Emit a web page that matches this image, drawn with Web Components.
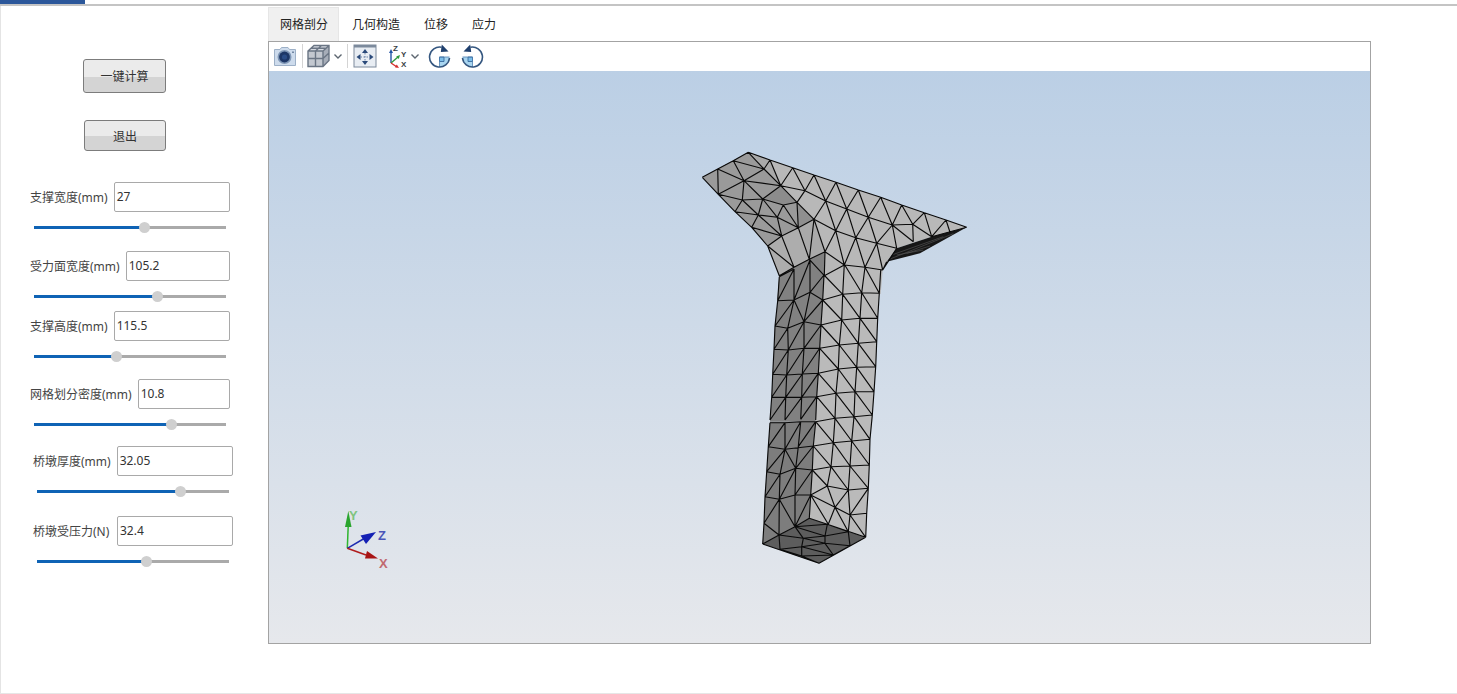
<!DOCTYPE html>
<html lang="zh">
<head>
<meta charset="utf-8">
<title>桥墩网格</title>
<style>
  html, body { margin: 0; height: 100%; background: #fff; overflow: hidden; }
  body { font: 12px "Noto Sans", "Noto Sans CJK SC", sans-serif; color: #333; }
</style>
</head>
<body>
<sim-app>
  <side-panel slot="side">
    <push-btn style="margin: 59px 0 0 83px; width: 83px; height: 34px">一键计算</push-btn>
    <push-btn style="margin: 27px 0 0 84px; width: 82px; height: 31px">退出</push-btn>
    <param-row value="27" pos="57.4" style="margin: 31px 0 0 30px">支撑宽度(mm)</param-row>
    <param-row value="105.2" pos="64.2" style="margin: 18px 0 0 30px">受力面宽度(mm)</param-row>
    <param-row value="115.5" pos="42.8" style="margin: 9px 0 0 30px">支撑高度(mm)</param-row>
    <param-row value="10.8" pos="71.5" style="margin: 17px 0 0 30px">网格划分密度(mm)</param-row>
    <param-row value="32.05" pos="74.6" style="margin: 16px 0 0 33px">桥墩厚度(mm)</param-row>
    <param-row value="32.4" pos="56.9" style="margin: 19px 0 0 33px; --label-w: 78px">桥墩受压力(N)</param-row>
  </side-panel>
  <view-tabs slot="main"></view-tabs>
  <view-frame slot="main">
    <view-toolbar></view-toolbar>
    <mesh-view></mesh-view>
  </view-frame>
</sim-app>

<script>
// ---- app shell: thin ribbon strip on top, side panel + main column below
class SimApp extends HTMLElement {
    constructor() {
        super();
        this.attachShadow({ mode: "open" });
        this.shadowRoot.innerHTML = `
          <style>
            :host { display: flex; flex-direction: column; width: 1457px; height: 694px; box-sizing: border-box;
                    border-bottom: 1px solid #e6e6e6; }
            .strip { height: 4px; flex: none; }
            .strip i { display: block; width: 85px; height: 4px; background: #2b579a; }
            .rule { height: 2px; flex: none; background: #c4c4c4; }
            .body { flex: 1; display: flex; border-left: 1px solid #e4e4e4; min-height: 0; }
            .side { flex: none; width: 267px; display: block; }
            .main { flex: none; width: 1103px; padding-top: 1px; }
          </style>
          <div class="strip"><i></i></div>
          <div class="rule"></div>
          <div class="body">
            <div class="side"><slot name="side"></slot></div>
            <div class="main"><slot name="main"></slot></div>
          </div>`;
    }
}

class SidePanel extends HTMLElement {
    constructor() {
        super();
        this.attachShadow({ mode: "open" });
        this.shadowRoot.innerHTML = `
          <style>
            :host { display: flex; flex-direction: column; align-items: flex-start; margin: -6px 0 0 -1px; }
          </style>
          <slot></slot>`;
    }
}

class PushBtn extends HTMLElement {
    constructor() {
        super();
        this.attachShadow({ mode: "open" });
        this.shadowRoot.innerHTML = `
          <style>
            :host { display: flex; align-items: center; justify-content: center; box-sizing: border-box;
                    border: 1px solid #7c7c7c; border-radius: 3px; color: #333; flex: none;
                    background: linear-gradient(#ebebeb 0 52%, #d4d4d4 52% 100%); }
          </style>
          <slot></slot>`;
    }
}

class ParamRow extends HTMLElement {
    constructor() {
        super();
        this.attachShadow({ mode: "open" });
        this.shadowRoot.innerHTML = `
          <style>
            :host { display: block; width: 200px; flex: none; }
            .top { display: flex; align-items: center; gap: 6px; height: 30px; }
            .label { flex: none; white-space: nowrap; color: #444; min-width: var(--label-w, 0); }
            .value { flex: 1; box-sizing: border-box; height: 30px; line-height: 28px; padding-left: 2px;
                     border: 1px solid #a9a9a9; border-radius: 2px; background: #fff; color: #333; }
            .slider { position: relative; height: 3px; width: 192px; margin: 13.5px 0 4.5px 4px; background: #aaa; }
            .fill { height: 3px; background: #0f63b5; }
            .thumb { position: absolute; top: -4px; width: 11px; height: 11px; margin-left: -5.5px;
                     border-radius: 50%; background: #cfcfcf; }
          </style>
          <div class="top">
            <span class="label"><slot></slot></span>
            <div class="value"></div>
          </div>
          <div class="slider"><div class="fill"></div><div class="thumb"></div></div>`;
    }

    connectedCallback() {
        const pos = this.getAttribute("pos") + "%";
        this.shadowRoot.querySelector(".value").textContent = this.getAttribute("value");
        this.shadowRoot.querySelector(".fill").style.width = pos;
        this.shadowRoot.querySelector(".thumb").style.left = pos;
    }
}

class ViewTabs extends HTMLElement {
    constructor() {
        super();
        this.attachShadow({ mode: "open" });
        this.shadowRoot.innerHTML = `
          <style>
            :host { display: flex; height: 34px; color: #222; }
            span { box-sizing: border-box; padding: 0 12px; line-height: 35px; white-space: nowrap; }
            .on { width: 71px; padding-right: 0; background: #f0f0f0; border: 1px solid #e6e6e6; border-bottom: 0; line-height: 33px; padding-left: 11px; }
            .on + span { padding-left: 13px; }
          </style>
          <span class="on">网格剖分</span><span>几何构造</span><span>位移</span><span>应力</span>`;
    }
}

class ViewFrame extends HTMLElement {
    constructor() {
        super();
        this.attachShadow({ mode: "open" });
        this.shadowRoot.innerHTML = `
          <style>
            :host { display: flex; flex-direction: column; box-sizing: border-box; height: 603px;
                    border: 1px solid #a3a3a3; background: #fff; }
          </style>
          <slot></slot>`;
    }
}

class ViewToolbar extends HTMLElement {
    constructor() {
        super();
        this.attachShadow({ mode: "open" });
        const chevron = (ml) => `<svg style="margin-left:${ml}px" width="10" height="24" viewBox="0 0 10 24"><path d="M1.5 10.5 5 14l3.5-3.5" fill="none" stroke="#5d6670" stroke-width="1.4"/></svg>`;
        const rotate = `
            <path d="M11.5 13H21.5A10 10 0 0 1 11.5 23Z" fill="#a8d5f0"/>
            <path d="M11.5 13H16V17.5H11.5Z" fill="#7cbde8" stroke="#2f5f95" stroke-width=".8"/>
            <path d="M11.5 13H21.5M11.5 13V23" stroke="#4b7fb0" stroke-width=".8" fill="none"/>
            <path d="M21.5 14A10 10 0 1 1 13.5 3.2" fill="none" stroke="#34567f" stroke-width="1.6"/>
            <path d="M13.8 .5 20.5 7.5 12.8 8Z" fill="#1f3f6d"/>`;
        this.shadowRoot.innerHTML = `
          <style>
            :host { display: flex; align-items: center; box-sizing: border-box; height: 29px; padding: 0 0 2px 4px; flex: none; background: #fff; }
            svg { flex: none; display: block; }
            .sep { flex: none; width: 1px; height: 24px; background: #d4d4d4; }
            text { font: bold 8px "Liberation Sans", sans-serif; fill: #3a3f46; }
          </style>
          <svg width="24" height="24" viewBox="0 0 24 24">
            <path d="M1.5 5.5H7L8.5 3.5H15L16.5 5.5H22.5V21.5H1.5Z" fill="#cddbec" stroke="#9db0c7"/>
            <circle cx="11.5" cy="13" r="7" fill="#7f97b6"/>
            <circle cx="11.5" cy="13" r="5.4" fill="#1d3767"/>
            <circle cx="11.5" cy="13" r="2.6" fill="#2a4c86"/>
            <rect x="19" y="7.5" width="2" height="1.5" fill="#7388a3"/>
          </svg>
          <div class="sep" style="margin-left:5px"></div>
          <svg style="margin-left:3px" width="24" height="24" viewBox="0 0 24 24">
            <path d="M2 7 8 1.5H23L17 7Z" fill="#d7dbe2"/>
            <path d="M17 7 23 1.5V16.5L17 22.5Z" fill="#a6adb8"/>
            <path d="M2 7H17V22.5H2Z" fill="#c3c8d0"/>
            <path d="M2 7 8 1.5H23V16.5L17 22.5H2ZM17 7H2M17 7 23 1.5M17 7V22.5M9.5 7V22.5M2 14.5H17M9.5 7 15.5 1.5M17 14.5 23 9M5 4.3H20" fill="none" stroke="#6a7584" stroke-width="1.4"/>
          </svg>
          ${chevron(3)}
          <div class="sep" style="margin-left:4px"></div>
          <svg style="margin-left:5px" width="24" height="24" viewBox="0 0 24 24">
            <rect x="1" y="1" width="22" height="22" fill="#e8edf3" stroke="#7c8a9c"/>
            <rect x="1" y="1" width="22" height="2.5" fill="#7c8a9c"/>
            <path d="M12 5 15 9H9ZM12 21 9 17H15ZM3.5 13 7.5 10V16ZM20.5 13 16.5 16V10Z" fill="#2b4a7a"/>
            <path d="M12 9V17M7.5 13H16.5" stroke="#6b83a6" stroke-dasharray="1.5 1.5"/>
          </svg>
          <svg style="margin-left:8px" width="24" height="24" viewBox="0 0 24 24">
            <path d="M6 19V8" stroke="#2456a6" stroke-width="1.4"/><path d="M6 5 8 9H4Z" fill="#2456a6"/>
            <path d="M6 19 13 13" stroke="#2e9a3c" stroke-width="1.4"/><path d="M15 11 13.8 15 11.2 12.4Z" fill="#2e9a3c"/>
            <path d="M6 19 12 23" stroke="#d42f2f" stroke-width="1.4"/><path d="M14 24 9.8 23.2 11.8 20.4Z" fill="#d42f2f"/>
            <text x="8" y="7">Z</text><text x="16" y="13">Y</text><text x="16" y="23">X</text>
          </svg>
          ${chevron(1)}
          <svg style="margin-left:8px" width="24" height="24" viewBox="0 0 24 24">${rotate}</svg>
          <svg style="margin-left:8px;transform:scaleX(-1)" width="24" height="24" viewBox="0 0 24 24">${rotate}</svg>`;
    }
}

// ---- mesh: points read off the reference, one set per region, x0/y0 is the region origin, all at 3x
const MESH_REGIONS = [
    { x0: 690, y0: 140,
      faces: [
        ["#b8b8b8", "37,112 175,37 240,60 308,83 372,105 438,127 505,150 572,172 635,195 703,218 768,240 830,262 725,290 620,325 590,365 578,390 572,462 400,480 262,480 268,407 233,318 185,262 135,215 85,163"],
        ["#9a9a9a", "37,112 175,37 222,87 272,137 321,187 325,263 275,288 233,318 185,262 135,215 85,163"],
        ["#a9a9a9", "175,37 240,60 272,137 222,87"],
        ["#8c8c8c", "218,177 272,137 321,187 280,195"],
        ["#adadad", "233,318 275,288 325,263 358,358 312,382 268,407"],
        ["#8f8f8f", "321,187 372,238 325,263"],
        ["#aaaaaa", "325,263 372,238 405,335 358,358"],
        ["#818181", "268,407 312,382 358,358 405,335 403,407 400,480 262,480"],
        ["#161616", "620,325 725,290 830,262 690,340 590,365"]
      ],
      hatch: ["605,345 760,290","598,358 790,281","620,345 700,330","650,340 720,318"],
      edges: [
        "37,112 83,87","83,87 130,62","130,62 175,37","175,37 240,60","240,60 308,83","308,83 372,105","372,105 438,127","438,127 505,150","505,150 572,172","572,172 635,195","635,195 703,218","703,218 768,240","768,240 830,262",
        "37,112 85,163","85,163 135,215","135,215 185,262","185,262 233,318","233,318 268,407",
        "83,87 85,163","83,87 162,122","130,62 162,122","130,62 222,87","175,37 222,87","222,87 240,60","222,87 162,122","222,87 272,137","240,60 272,137",
        "162,122 272,137","162,122 85,163","162,122 157,180","162,122 218,177","272,137 218,177","85,163 157,180","157,180 135,215","157,180 218,177","157,180 205,225","135,215 205,225","218,177 205,225","218,177 262,232","218,177 280,195","280,195 321,187","272,137 321,187",
        "272,137 345,152","308,83 272,137","308,83 345,152","372,105 345,152","345,152 321,187","345,152 407,183","372,105 407,183","438,127 407,183","438,127 470,207","505,150 470,207","505,150 535,232","572,172 535,232","572,172 607,255","635,195 607,255","635,195 668,253","703,218 668,253","703,218 725,290","768,240 725,290","768,240 780,277","830,262 725,290","668,253 725,290","607,255 668,253","668,253 670,305","607,255 670,305","607,255 560,310","607,255 620,325","535,232 607,255","470,207 535,232","407,183 470,207",
        "321,187 372,238","407,183 372,238","407,183 437,272","470,207 437,272","470,207 497,293","535,232 497,293","535,232 560,310","372,238 437,272","437,272 497,293","497,293 560,310","560,310 620,325","372,238 325,263","321,187 325,263","280,195 325,263","280,195 262,232","262,232 325,263","262,232 205,225","205,225 275,288","262,232 275,288","325,263 275,288","185,262 205,225","185,262 275,288","233,318 275,288","275,288 312,382","233,318 312,382","268,407 312,382",
        "325,263 358,358","372,238 358,358","372,238 405,335","437,272 405,335","437,272 463,375","497,293 463,375","497,293 525,382","560,310 525,382","560,310 578,390","620,325 578,390","590,365 578,390","358,358 405,335","405,335 463,375","463,375 525,382","525,382 578,390","312,382 358,358","358,358 403,407","405,335 403,407","403,407 463,375"
      ] },
    { x0: 750, y0: 260,
      faces: [
        ["#bababa", "222,45 283,13 345,22 392,30 388,100 383,175 380,245 377,320 372,395 367,465 367,485 197,485 200,410 205,340 209,265 213,195 218,120"],
        ["#818181", "88,50 132,27 180,0 222,45 218,120 213,195 209,265 205,340 200,410 197,485 60,485 65,412 68,343 72,268 75,198 83,122"]
      ],
      edges: [
        "88,50 83,122","83,122 75,198","75,198 72,268","72,268 68,343","68,343 65,412","65,412 60,480",
        "222,45 218,120","218,120 213,195","213,195 209,265","209,265 205,340","205,340 200,410","200,410 197,480",
        "392,30 388,100","388,100 383,175","383,175 380,245","380,245 377,320","377,320 372,395","372,395 367,465",
        "222,45 278,103","218,120 278,103","278,103 335,98","335,98 388,100","283,13 278,103","345,22 335,98","283,13 335,98","345,22 388,100",
        "218,120 275,180","278,103 275,180","278,103 330,175","335,98 330,175","335,98 383,175","275,180 330,175","330,175 383,175","213,195 275,180",
        "213,195 268,255","275,180 268,255","275,180 325,250","330,175 325,250","330,175 380,245","209,265 268,255","268,255 325,250","325,250 380,245",
        "209,265 265,327","268,255 265,327","268,255 320,322","325,250 320,322","325,250 377,320","205,340 265,327","265,327 320,322","320,322 377,320",
        "205,340 258,400","265,327 258,400","265,327 315,395","320,322 315,395","320,322 372,395","200,410 258,400","258,400 315,395","315,395 372,395",
        "200,410 255,475","258,400 255,475","258,400 312,470","315,395 312,470","315,395 367,465",
        "88,50 132,27","132,27 132,120","83,122 132,120","132,27 83,122","132,120 180,0","180,0 180,97","180,97 222,45","132,120 180,97","180,97 218,120","180,97 162,185","132,120 162,185","218,120 162,185","132,120 75,198","132,120 113,205","75,198 113,205","113,205 162,185","162,185 213,195","162,185 162,265","113,205 115,270","162,185 115,270","113,205 72,268","72,268 115,270","115,270 162,265","162,265 209,265","213,195 162,265","115,270 68,343","115,270 110,345","162,265 110,345","162,265 157,342","209,265 157,342","68,343 110,345","110,345 157,342","157,342 205,340","110,345 65,412","110,345 107,412","157,342 107,412","157,342 155,412","205,340 155,412","65,412 107,412","107,412 155,412","155,412 200,410",
        "107,412 60,480","107,412 105,480","155,412 105,480","155,412 152,478","200,410 152,478"
      ] },
    { x0: 750, y0: 410,
      faces: [
        ["#bababa", "197,35 255,25 312,20 367,15 360,88 358,165 355,235 350,310 347,382 232,343 178,325 182,255 187,180 190,108"],
        ["#7d7d7d", "60,35 197,35 190,108 187,180 182,255 178,325 135,350 87,375 38,402 42,340 45,260 50,185 55,110"],
        ["#5d5d5d", "38,402 87,375 135,350 178,325 232,343 347,382 207,460"]
      ],
      edges: [
        "60,38 105,38","105,38 152,35","152,35 197,35","197,35 255,25","255,25 312,20","312,20 367,15",
        "60,38 55,110","55,110 50,185","50,185 45,260","45,260 42,340","42,340 38,402","38,402 207,460","207,460 347,382","347,382 350,310","350,310 355,235","355,235 358,165","358,165 360,88","360,88 367,15",
        "197,35 190,108","190,108 187,180","187,180 182,255","182,255 178,325",
        "55,110 105,38","105,118 105,38","105,118 152,35","105,118 190,108","152,35 145,110","197,35 145,110","55,110 105,118","105,118 137,175","145,110 137,175","190,108 137,175","137,175 187,180","105,118 50,185","105,118 90,193","50,185 90,193","90,193 137,175","137,175 135,255","187,180 135,255","90,193 88,268","137,175 88,268","90,193 45,260","45,260 88,268","88,268 135,255","135,255 182,255","88,268 135,350","135,255 135,350","182,255 135,350","178,325 135,350","88,268 42,340","88,268 87,375","42,340 87,375","87,375 135,350","87,375 38,402",
        "197,35 250,98","255,25 305,93","312,20 360,88","255,25 250,98","312,20 305,93","190,108 250,98","250,98 305,93","305,93 360,88",
        "190,108 243,170","250,98 300,168","305,93 358,165","250,98 243,170","305,93 300,168","187,180 243,170","243,170 300,168","300,168 358,165",
        "187,180 232,228","243,170 232,228","243,170 295,240","300,168 295,240","300,168 355,235","182,255 232,228","232,228 295,240","295,240 355,235",
        "182,255 255,292","232,228 255,292","295,240 255,292","295,240 300,315","355,235 300,315","182,255 235,343","255,292 235,343","255,292 300,315","300,315 350,310","255,292 295,365","300,315 295,365","300,315 347,382",
        "178,325 232,343","232,343 347,382","135,350 232,343","135,350 225,378","232,343 225,378","87,375 160,385","135,350 160,385","160,385 225,378","225,378 295,365","232,343 295,365","225,378 225,400","295,365 300,407","225,400 300,407","160,385 155,410","87,375 90,418","90,418 155,410","155,410 250,435","225,400 250,435","300,407 250,435","155,410 155,438","155,410 225,400","160,385 225,400","155,438 207,460","90,418 155,438","155,438 250,435"
      ] }
];

function meshMarkup() {
    let out = "", d = "", h = "";
    for (const r of MESH_REGIONS) {
        const pt = (p) => {
            const [x, y] = p.split(",").map(Number);
            return (r.x0 + x / 3).toFixed(1) + " " + (r.y0 + y / 3).toFixed(1);
        };
        const seg = (e) => {
            const [a, b] = e.split(" ");
            return "M" + pt(a) + "L" + pt(b);
        };
        for (const [fill, pts] of r.faces) {
            out += `<polygon fill="${fill}" points="${pts.split(" ").map(pt).join(" ")}"/>`;
        }
        d += r.edges.map(seg).join("");
        h += (r.hatch || []).map(seg).join("");
    }
    return out + `<path d="${h}" fill="none" stroke="#5a5a5a" stroke-width=".6"/>`
               + `<path d="${d}" fill="none" stroke="#0a0a0a" stroke-width="1.15"/>`;
}

class MeshView extends HTMLElement {
    constructor() {
        super();
        this.attachShadow({ mode: "open" });
        this.shadowRoot.innerHTML = `
          <style>
            :host { display: block; flex: 1; min-height: 0; background: linear-gradient(#bbcfe5, #e6e8ec); }
            svg { display: block; width: 100%; height: 100%; }
            text { font: bold 13px "Liberation Sans", sans-serif; }
          </style>
          <svg viewBox="269 71 1101 572">
            ${meshMarkup()}
            <g>
              <path d="M347.3 548.3 348.3 524" stroke="#2fb52f" stroke-width="1.5"/>
              <path d="M348.3 511 351.5 527H345Z" fill="#2aa52e"/>
              <path d="M347.3 548.3 365 538" stroke="#1c2bb0" stroke-width="1.5"/>
              <path d="M376 532 366 544 360.5 535.5Z" fill="#1420b4"/>
              <path d="M347.3 548.3 366 555" stroke="#b01c1c" stroke-width="1.5"/>
              <path d="M378 558.5 365 558.5 367 551Z" fill="#a81414"/>
              <text x="349" y="520" fill="#7fc47f">Y</text>
              <text x="378" y="540" fill="#4a56b8">Z</text>
              <text x="379" y="568" fill="#c06a70">X</text>
            </g>
          </svg>`;
    }
}

customElements.define("sim-app", SimApp);
customElements.define("side-panel", SidePanel);
customElements.define("push-btn", PushBtn);
customElements.define("param-row", ParamRow);
customElements.define("view-tabs", ViewTabs);
customElements.define("view-frame", ViewFrame);
customElements.define("view-toolbar", ViewToolbar);
customElements.define("mesh-view", MeshView);
</script>
</body>
</html>
